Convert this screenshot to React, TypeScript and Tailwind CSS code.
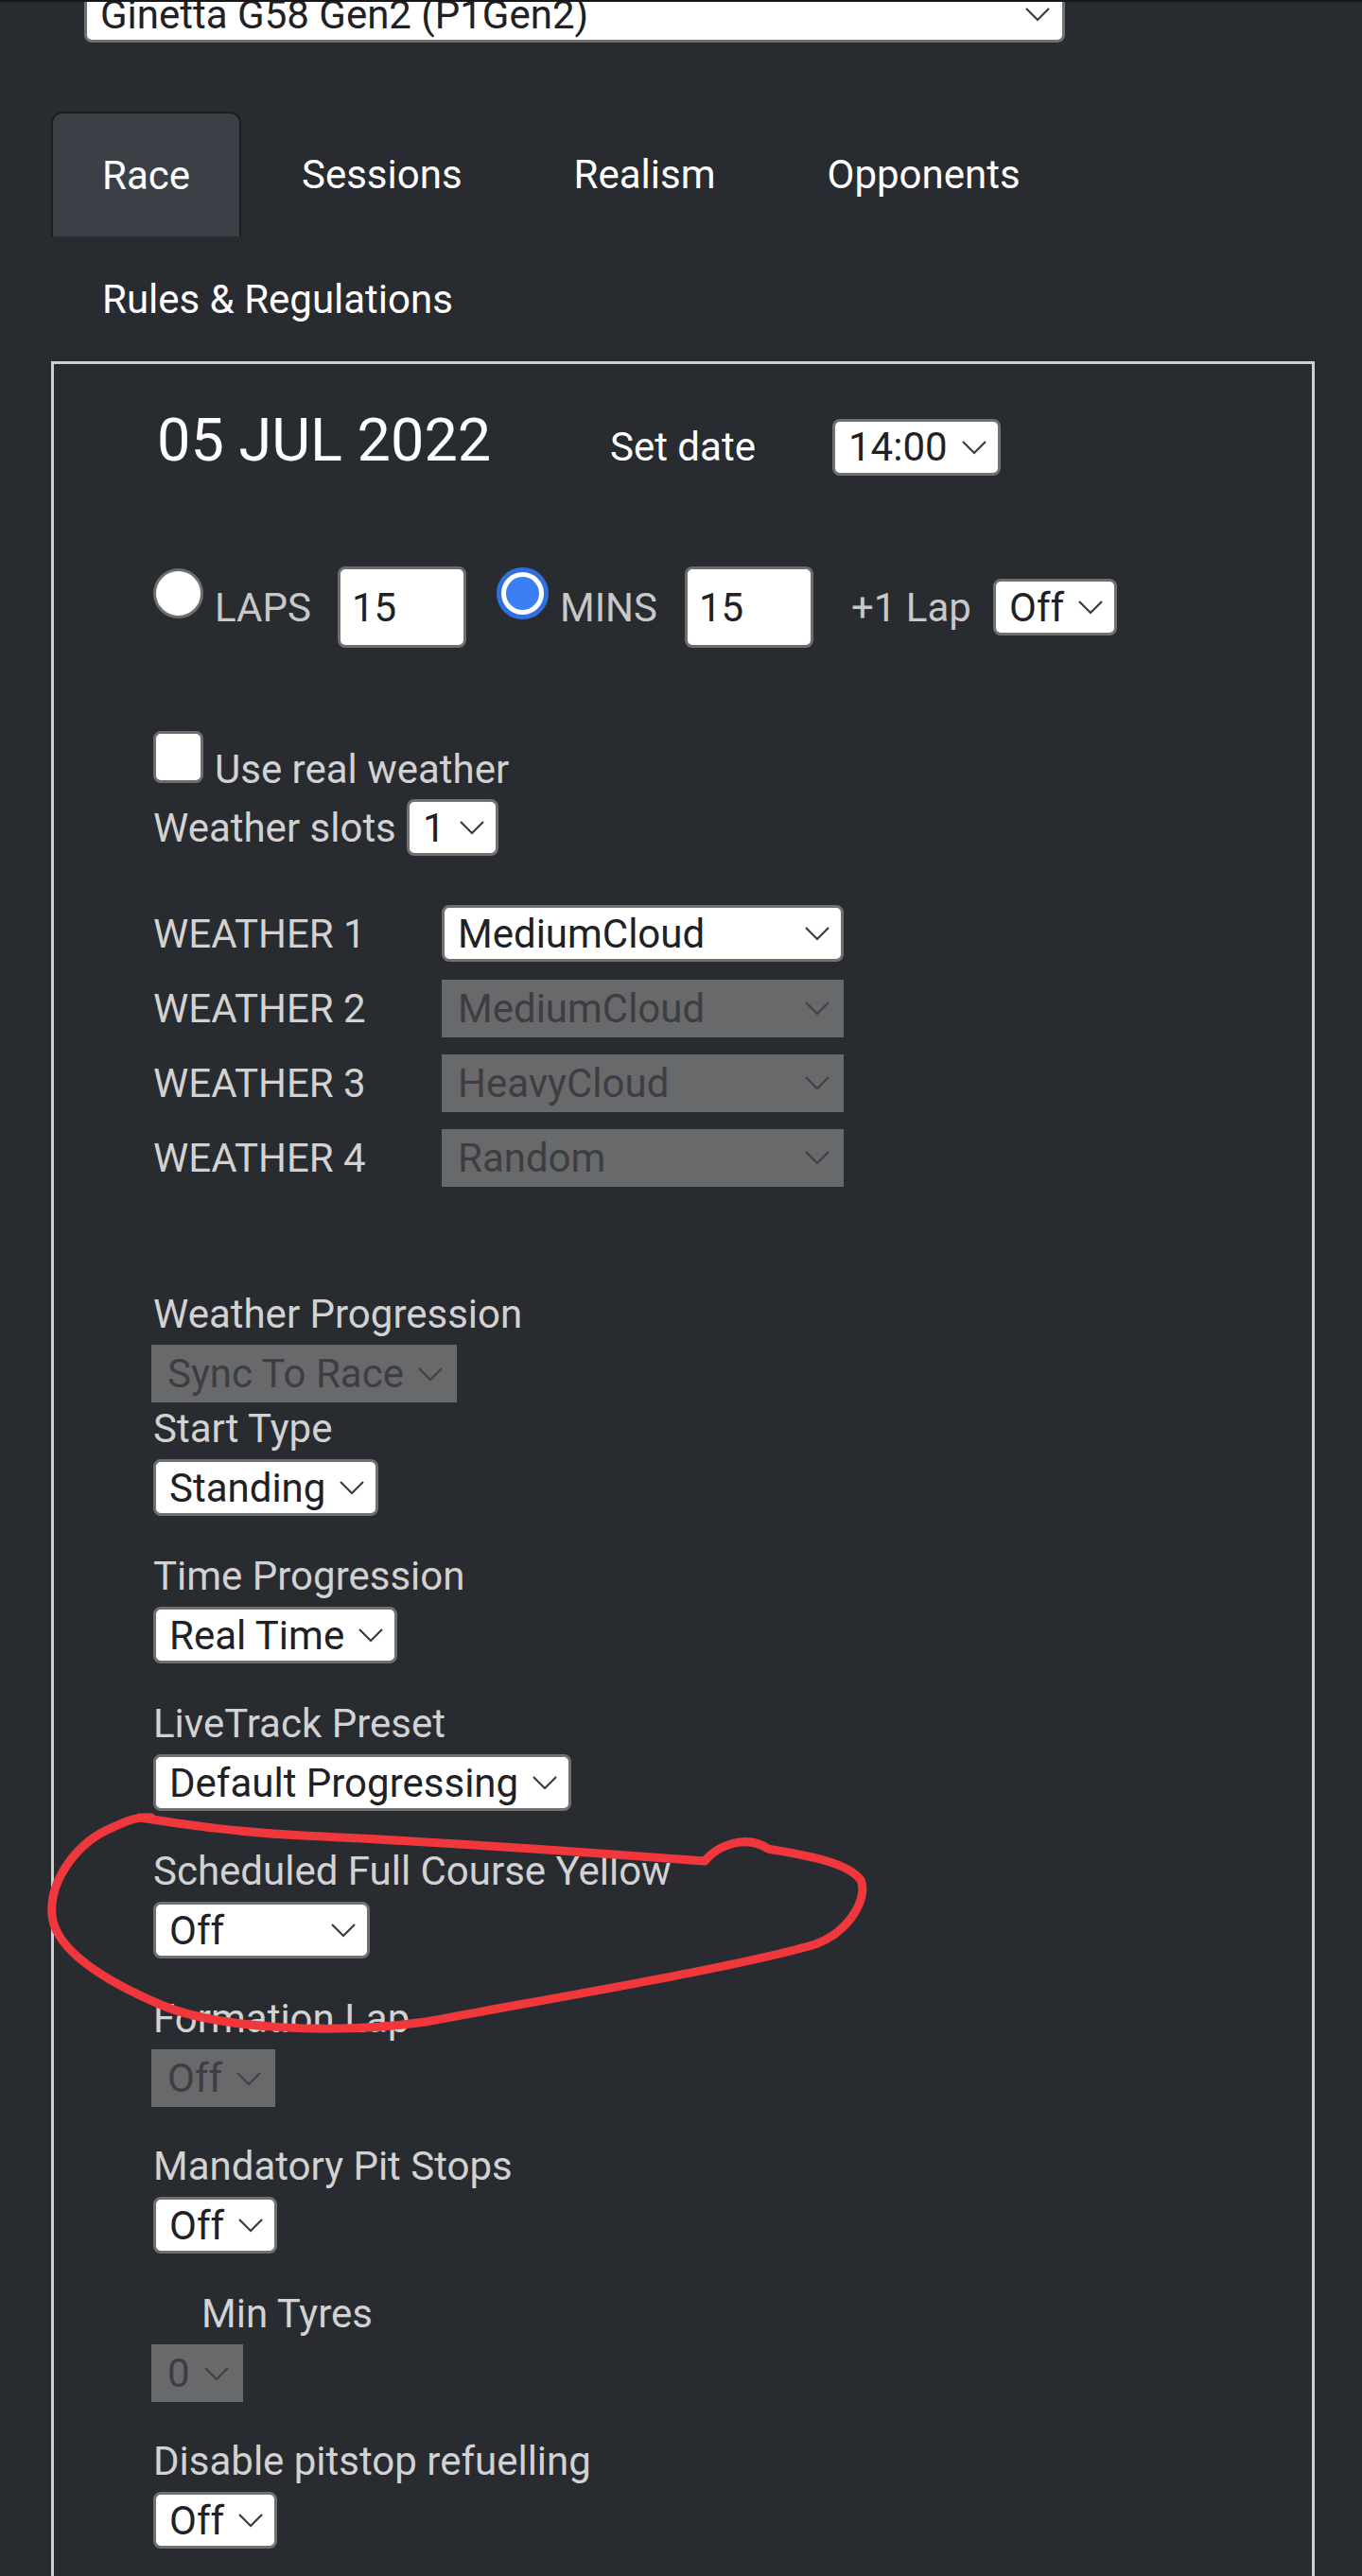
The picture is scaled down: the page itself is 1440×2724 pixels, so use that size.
import React from "react";

const Chevron = ({ color = "#3a3a3c" }: { color?: string }) => (
  <svg width="28" height="16" viewBox="0 0 28 16" className="shrink-0">
    <polyline points="2,2 14,14 26,2" fill="none" stroke={color} strokeWidth="2.2" />
  </svg>
);

const Sel = ({ text, w, className = "" }: { text: string; w?: string; className?: string }) => (
  <div
    className={
      "flex h-[60px] items-center rounded-[8px] border-[3px] border-[#707070] bg-white pl-[14px] pr-[11px] text-[#202124] " +
      (w ? w + " justify-between " : "w-fit ") +
      className
    }
  >
    <span className="leading-[49px] whitespace-nowrap">{text}</span>
    <span className="ml-[14px] flex items-center">
      <Chevron />
    </span>
  </div>
);

const DisSel = ({ text, w, className = "" }: { text: string; w?: string; className?: string }) => (
  <div
    className={
      "flex h-[61px] items-center border-[3px] border-[#68696b] bg-[#68696b] pl-[14px] pr-[11px] text-[#3d3e42] " +
      (w ? w + " justify-between " : "w-fit ") +
      className
    }
  >
    <span className="leading-[49px] whitespace-nowrap">{text}</span>
    <span className="ml-[14px] flex items-center">
      <Chevron color="#404145" />
    </span>
  </div>
);

const Label = ({ text, className = "" }: { text: string; className?: string }) => (
  <div className={"leading-[49px] text-[#d2d2d2] " + className}>{text}</div>
);

export default function App() {
  const tabs = ["Race", "Sessions", "Realism", "Opponents", "Rules & Regulations"];
  return (
    <div className="relative h-[2724px] overflow-hidden bg-[#282b30] font-['Roboto','Liberation_Sans',sans-serif] text-[42px] text-white">
      <div className="relative z-10 h-[2px] bg-[#16171a]" />
      <div className="pl-[54px] pr-[50px]">
        {/* car select */}
        <div className="-mt-[17px] ml-[35px]">
          <Sel text="Ginetta G58 Gen2 (P1Gen2)" w="w-[1037px]" className="pl-[14px] pr-[12px]" />
        </div>

        {/* tabs */}
        <div className="mt-[73px] flex flex-wrap gap-x-[10px]">
          {tabs.map((t, i) =>
            i === 0 ? (
              <div
                key={t}
                className="flex h-[132px] items-center rounded-t-[12px] border-2 border-b-0 border-[#1c1d21] bg-[#3b3f46] px-[52px] text-white"
              >
                {t}
              </div>
            ) : (
              <div key={t} className="flex h-[132px] items-center px-[54px] text-white">
                {t}
              </div>
            )
          )}
        </div>

        {/* panel */}
        <div className="border-[3px] border-b-0 border-[#cfcfcf] pb-[300px] pl-[105px]">
          {/* date row */}
          <div className="mt-[43px] flex items-baseline">
            <span className="ml-[4px] w-[479px] text-[63px] leading-[75px] text-white">05 JUL 2022</span>
            <span className="w-[235px] text-white">Set date</span>
            <Sel text="14:00" />
          </div>

          {/* laps / mins row */}
          <div className="mt-[95px] flex h-[86px] items-center text-[#c8c8c8]">
            <div className="mb-[30px] h-[53px] w-[53px] shrink-0 rounded-full border-[3px] border-[#6e6e6e] bg-white" />
            <span className="ml-[12px] w-[130px]">LAPS</span>
            <div className="flex h-[86px] w-[136px] items-center rounded-[8px] border-[3px] border-[#6e6e6e] bg-white pl-[12px] text-[#202124]">
              15
            </div>
            <div className="mb-[30px] ml-[32px] flex h-[55px] w-[55px] shrink-0 items-center justify-center rounded-full border-[5px] border-[#2f6fdf] bg-white">
              <div className="h-[35px] w-[35px] rounded-full bg-[#3b7ff2]" />
            </div>
            <span className="ml-[12px] w-[132px]">MINS</span>
            <div className="flex h-[86px] w-[136px] items-center rounded-[8px] border-[3px] border-[#6e6e6e] bg-white pl-[12px] text-[#202124]">
              15
            </div>
            <span className="ml-[40px] w-[150px]">+1 Lap</span>
            <Sel text="Off" />
          </div>

          {/* real weather */}
          <div className="mt-[88px] flex items-baseline text-[#d2d2d2]">
            <div className="h-[55px] w-[53px] shrink-0 rounded-[8px] border-[3px] border-[#6e6e6e] bg-white" />
            <span className="ml-[12px] leading-[49px]">Use real weather</span>
          </div>
          <div className="mt-[7px] flex items-center text-[#d2d2d2]">
            <span className="w-[268px] leading-[49px]">Weather slots</span>
            <Sel text="1" />
          </div>

          {/* weather rows */}
          <div className="mt-[52px] flex flex-col gap-[19px]">
            <div className="flex h-[60px] items-center">
              <span className="w-[305px] text-[#d2d2d2]">WEATHER 1</span>
              <Sel text="MediumCloud" w="w-[425px]" />
            </div>
            <div className="flex h-[60px] items-center">
              <span className="w-[305px] text-[#d2d2d2]">WEATHER 2</span>
              <DisSel text="MediumCloud" w="w-[425px]" />
            </div>
            <div className="flex h-[60px] items-center">
              <span className="w-[305px] text-[#d2d2d2]">WEATHER 3</span>
              <DisSel text="HeavyCloud" w="w-[425px]" />
            </div>
            <div className="flex h-[60px] items-center">
              <span className="w-[305px] text-[#d2d2d2]">WEATHER 4</span>
              <DisSel text="Random" w="w-[425px]" />
            </div>
          </div>

          {/* settings list */}
          <Label text="Weather Progression" className="mt-[111px]" />
          <DisSel text="Sync To Race" className="mt-[8px] -ml-[2px]" />
          <Label text="Start Type" className="mt-[3px]" />
          <Sel text="Standing" className="mt-[8px]" />

          <Label text="Time Progression" className="mt-[39px]" />
          <Sel text="Real Time" className="mt-[8px]" />

          <Label text="LiveTrack Preset" className="mt-[39px]" />
          <Sel text="Default Progressing" className="mt-[8px]" />

          <Label text="Scheduled Full Course Yellow" className="mt-[39px]" />
          <Sel text="Off" w="w-[229px]" className="mt-[8px]" />

          <Label text="Formation Lap" className="mt-[39px]" />
          <DisSel text="Off" className="mt-[8px] -ml-[2px]" />

          <Label text="Mandatory Pit Stops" className="mt-[38px]" />
          <Sel text="Off" className="mt-[8px]" />

          <Label text="Min Tyres" className="mt-[39px] pl-[51px]" />
          <DisSel text="0" className="mt-[8px] -ml-[2px]" />

          <Label text="Disable pitstop refuelling" className="mt-[38px]" />
          <Sel text="Off" className="mt-[8px]" />
        </div>
      </div>

      {/* hand-drawn red annotation */}
      <svg
        className="pointer-events-none absolute left-0 top-0"
        width="1440"
        height="2724"
        viewBox="0 0 1440 2724"
      >
        <path
          d="M 147 1922 C 200 1930, 255 1938, 320 1941 C 450 1947, 600 1957, 745 1968 C 760 1950, 790 1940, 812 1955 C 850 1962, 895 1968, 910 1988 C 918 2005, 900 2042, 862 2056 C 780 2080, 600 2110, 450 2138 C 350 2152, 230 2145, 170 2120 C 105 2092, 58 2060, 55 2025 C 52 1990, 80 1948, 120 1932 C 135 1925, 145 1921, 160 1922"
          fill="none"
          stroke="#f0383c"
          strokeWidth="9"
          strokeLinecap="round"
          strokeLinejoin="round"
        />
      </svg>
    </div>
  );
}
